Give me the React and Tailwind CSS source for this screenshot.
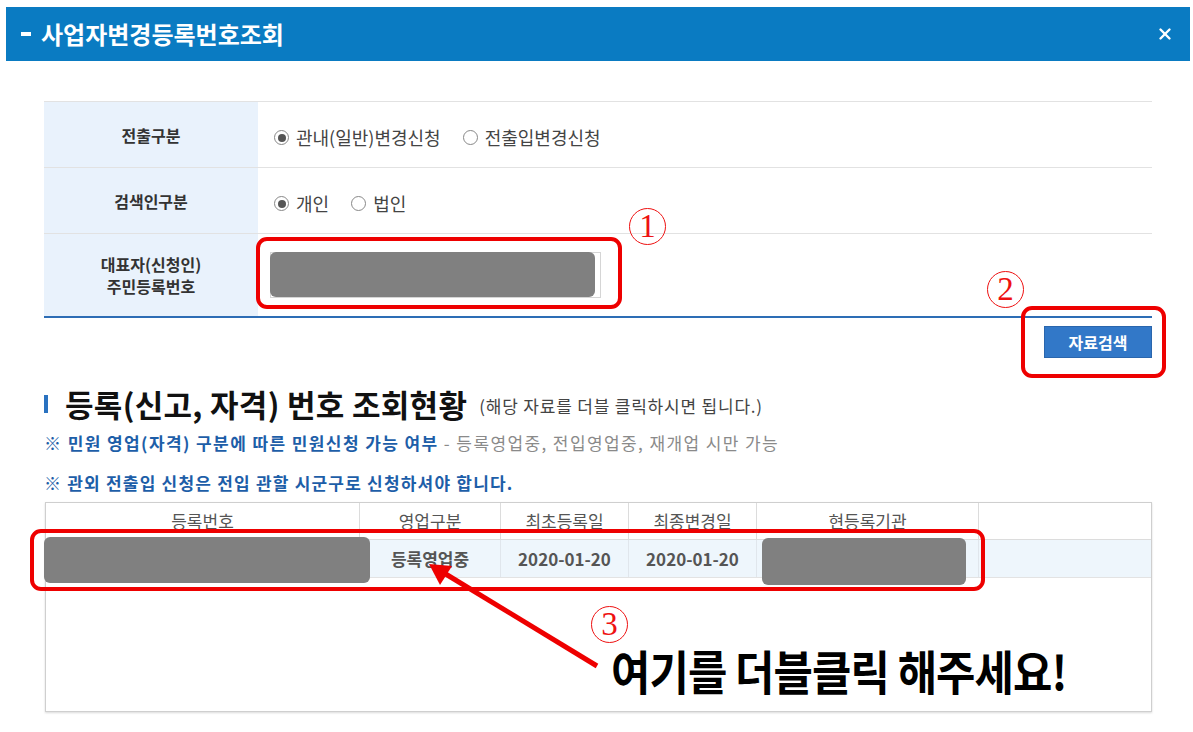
import { X } from "lucide-react";

const font = { fontFamily: '"Noto Sans CJK KR", "Noto Sans", sans-serif' };

function Radio({ checked, label }) {
  return (
    <label className="flex items-center gap-[7px] text-[18px] text-[#444]">
      <span className="flex h-[15px] w-[15px] items-center justify-center rounded-full border border-[#888] bg-white">
        {checked && <span className="h-[8px] w-[8px] rounded-full bg-[#555]" />}
      </span>
      {label}
    </label>
  );
}

function Circled({ n, className }) {
  return (
    <div
      className={
        "absolute flex h-[37px] w-[37px] items-center justify-center rounded-full border-[1.5px] border-[#ee1111] text-[33px] leading-none text-[#ee1111] " +
        className
      }
      style={{ fontFamily: '"Liberation Serif", serif' }}
    >
      {n}
    </div>
  );
}

function FormRow({ label, children, tall }) {
  return (
    <div className={"flex border-b border-[#e2e2e2] " + (tall ? "h-[82px] border-b-0" : "h-[66px]")}>
      <div className="flex w-[214px] items-center justify-center bg-[#e9f2fc] text-center text-[16px] font-bold leading-[22px] text-[#333]">
        {label}
      </div>
      <div className="flex flex-1 items-center pl-[16px]">{children}</div>
    </div>
  );
}

const cols = [
  { name: "등록번호", w: "w-[314px]" },
  { name: "영업구분", w: "w-[141px]" },
  { name: "최초등록일", w: "w-[128px]" },
  { name: "최종변경일", w: "w-[128px]" },
  { name: "현등록기관", w: "w-[222px]" },
];

const row = ["", "등록영업중", "2020-01-20", "2020-01-20", ""];

export default function App() {
  return (
    <div className="relative h-[732px] w-[1193px] overflow-hidden bg-white" style={font}>
      <header className="ml-[6px] mt-[7px] flex h-[54px] w-[1184px] items-center justify-between bg-[#0a7bc2] pl-[15px] pr-[16px]">
        <h1 className="flex items-center gap-[10px] text-[24px] font-bold text-white">
          <span className="h-[4px] w-[10px] bg-white" />
          사업자변경등록번호조회
        </h1>
        <X size={18} strokeWidth={3.2} className="text-white" />
      </header>

      <main className="ml-[44px] w-[1108px]">
        <div className="mt-[40px] border-t border-[#e2e2e2] border-b-2 border-b-[#2d6db5]">
          <FormRow label="전출구분">
            <div className="mt-[6px] flex gap-[22px]">
              <Radio checked label="관내(일반)변경신청" />
              <Radio label="전출입변경신청" />
            </div>
          </FormRow>
          <FormRow label="검색인구분">
            <div className="mt-[6px] flex gap-[22px]">
              <Radio checked label="개인" />
              <Radio label="법인" />
            </div>
          </FormRow>
          <FormRow
            tall
            label={
              <span>
                대표자(신청인)
                <br />
                주민등록번호
              </span>
            }
          >
            <div className="relative -ml-[4px] h-[46px] w-[331px] border border-[#d5d5d5] bg-white">
              <div className="absolute -left-px -top-px bottom-0 right-[5px] rounded-[6px] bg-[#808080]" />
            </div>
          </FormRow>
        </div>

        <div className="mt-[8px] flex justify-end">
          <button className="h-[32px] w-[108px] border border-[#2a66ad] bg-[#3278c8] text-[16px] font-bold text-white">
            자료검색
          </button>
        </div>

        <div className="mt-[28px] flex items-end gap-[12px]">
          <div className="flex items-center gap-[17px]">
            <span className="h-[18px] w-[4px] bg-[#2a72c0]" />
            <h2 className="text-[31px] font-bold leading-[36px] tracking-[0.3px] text-[#111]">
              등록(신고, 자격) 번호 조회현황
            </h2>
          </div>
          <span className="pb-[4px] text-[17px] tracking-[0.8px] text-[#444]">(해당 자료를 더블 클릭하시면 됩니다.)</span>
        </div>

        <p className="mt-[9px] text-[17px] leading-[24px] tracking-[1.4px]">
          <span className="font-bold text-[#1d5ea8]">※ 민원 영업(자격) 구분에 따른 민원신청 가능 여부</span>
          <span className="text-[#8a8a8a]"> - 등록영업중, 전입영업중, 재개업 시만 가능</span>
        </p>
        <p className="mt-[16px] text-[17px] font-bold leading-[24px] tracking-[1.2px] text-[#1d5ea8]">
          ※ 관외 전출입 신청은 전입 관할 시군구로 신청하셔야 합니다.
        </p>

        <div className="ml-px mt-[7px] h-[210px] w-[1107px] border border-[#cfcfcf] shadow-[0_1px_2px_rgba(0,0,0,0.15)]">
          <div className="flex h-[37px] border-b border-[#dcdcdc] text-[17px] text-[#555]">
            {cols.map((c) => (
              <div key={c.name} className={"flex items-center justify-center border-r border-[#dcdcdc] " + c.w}>
                {c.name}
              </div>
            ))}
            <div className="flex-1" />
          </div>
          <div className="flex h-[38px] border-b border-[#e3e3e3] bg-[#eef6fc] text-[17px] font-semibold text-[#555]">
            {cols.map((c, i) => (
              <div key={c.name} className={"flex items-center justify-center border-r border-[#e0e6ec] " + c.w}>
                {row[i]}
              </div>
            ))}
            <div className="flex-1" />
          </div>
        </div>
      </main>

      {/* redactions */}
      <div className="absolute left-[44px] top-[537px] h-[46px] w-[326px] rounded-[6px] bg-[#808080]" />
      <div className="absolute left-[762px] top-[538px] h-[47px] w-[204px] rounded-[6px] bg-[#808080]" />

      {/* annotations */}
      <div className="absolute left-[256px] top-[237px] h-[72px] w-[366px] rounded-[11px] border-[4px] border-[#ee0000]" />
      <div className="absolute left-[1021px] top-[306px] h-[72px] w-[145px] rounded-[11px] border-[4px] border-[#ee0000]" />
      <div className="absolute left-[30px] top-[529px] h-[62px] w-[955px] rounded-[11px] border-[4px] border-[#ee0000]" />

      <Circled n="1" className="left-[629px] top-[208px]" />
      <Circled n="2" className="left-[987px] top-[271px]" />
      <Circled n="3" className="left-[591px] top-[606px]" />

      <svg className="absolute left-0 top-0" width="1193" height="732">
        <line x1="597" y1="666" x2="444" y2="573" stroke="#ee0000" strokeWidth="5" />
        <polygon points="429,564 452,566 440,585" fill="#ee0000" />
      </svg>

      <div className="absolute left-[611px] top-[646px] origin-left scale-x-[0.91] whitespace-nowrap text-[47px] font-bold leading-[48px] tracking-[-1px] text-black">
        여기를 더블클릭 해주세요!
      </div>
    </div>
  );
}
